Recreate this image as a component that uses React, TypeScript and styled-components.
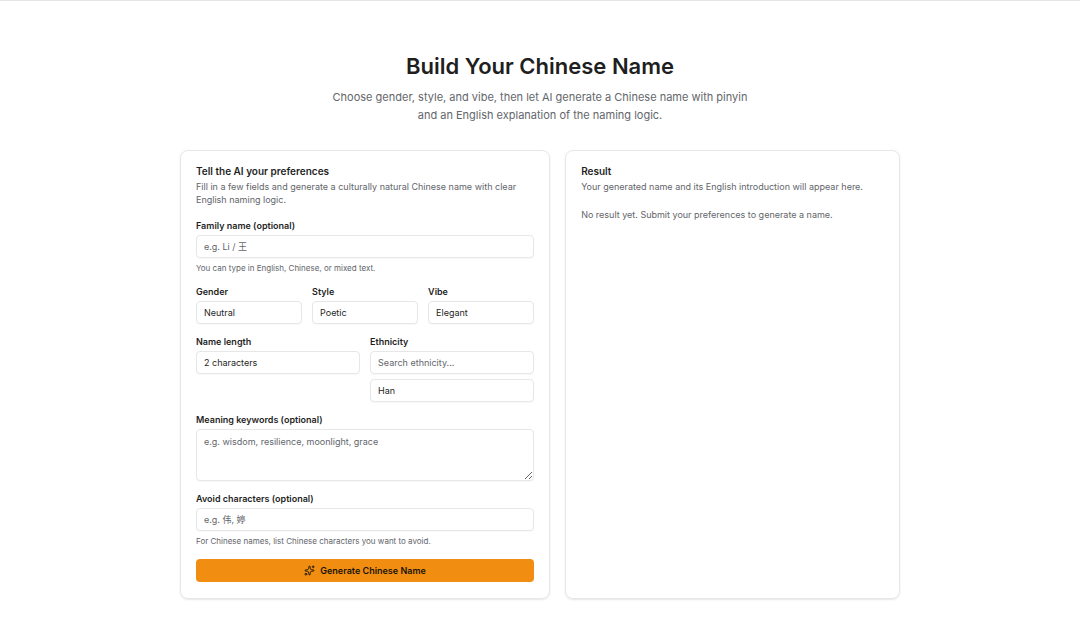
import React from "react";
import styled, { createGlobalStyle } from "styled-components";
import { Sparkles } from "lucide-react";

const GlobalStyle = createGlobalStyle`
  *, *::before, *::after { box-sizing: border-box; }
  body {
    margin: 0;
    background: #fff;
    color: #1f1f1f;
    font-family: Inter, "Noto Sans CJK SC", sans-serif;
    font-size: 9px;
  }
  h1, h2, p { margin: 0; }
`;

const Page = styled.main`
  border-top: 1px solid #e5e5e5;
  padding: 49px 16px 20px;
`;

const Container = styled.div`
  max-width: 720px;
  margin: 0 auto;
`;

const Hero = styled.header`
  text-align: center;
  margin-bottom: 26px;
`;

const HeroTitle = styled.h1`
  font-size: 22px;
  line-height: 32px;
  font-weight: 600;
`;

const HeroText = styled.p`
  max-width: 430px;
  margin: 6px auto 0;
  font-size: 11px;
  line-height: 18px;
  color: #63666b;
`;

const Columns = styled.div`
  display: grid;
  grid-template-columns: 21fr 19fr;
  gap: 15px;
`;

const Card = styled.section`
  border: 1px solid #e6e7e9;
  border-radius: 8px;
  padding: 15px 15px 16px;
  box-shadow: 0 1px 2px rgba(0, 0, 0, 0.1);
`;

const CardTitle = styled.h2`
  font-size: 10px;
  line-height: 10px;
  font-weight: 600;
`;

const CardText = styled.p`
  margin-top: 4px;
  line-height: 13px;
  color: #63666b;
`;

const EmptyState = styled.p`
  margin-top: 15px;
  line-height: 13px;
  color: #63666b;
`;

const Form = styled.form`
  display: grid;
  gap: 12px;
  margin-top: 14px;
`;

const Row = styled.div<{ $columns: number }>`
  display: grid;
  grid-template-columns: repeat(${(p) => p.$columns}, minmax(0, 1fr));
  align-items: start;
  gap: 10px;
`;

const Field = styled.div`
  display: grid;
  gap: 5px;
`;

const Label = styled.label`
  padding-top: 1px;
  margin-bottom: -1px;
  font-size: 9px;
  line-height: 10px;
  font-weight: 600;
`;

const Hint = styled.p`
  font-size: 8px;
  line-height: 11px;
  color: #63666b;
`;

const control = `
  width: 100%;
  margin: 0;
  border: 1px solid #e6e7e9;
  border-radius: 4px;
  background: #fff;
  color: #1f1f1f;
  font: inherit;
  box-shadow: 0 1px 1px rgba(0, 0, 0, 0.03);
  &::placeholder { color: #63666b; opacity: 1; }
`;

const Input = styled.input`
  ${control}
  height: 23px;
  padding: 0 7px;
`;

const Select = styled.select`
  ${control}
  height: 23px;
  padding: 0 7px;
  appearance: none;
`;

const Textarea = styled.textarea`
  ${control}
  display: block;
  height: 52px;
  padding: 5px 7px;
  line-height: 13px;
  resize: vertical;
`;

const SubmitButton = styled.button`
  display: flex;
  align-items: center;
  justify-content: center;
  gap: 5px;
  height: 23px;
  border: 0;
  border-radius: 4px;
  background: #f18e11;
  color: #1a1408;
  font: inherit;
  font-weight: 600;
`;

type SelectFieldProps = { id: string; label: string; options: string[] };

const SelectField = ({ id, label, options }: SelectFieldProps) => (
  <Field>
    <Label htmlFor={id}>{label}</Label>
    <Select id={id}>
      {options.map((o) => (
        <option key={o}>{o}</option>
      ))}
    </Select>
  </Field>
);

export default function App() {
  return (
    <>
      <GlobalStyle />
      <Page>
        <Container>
          <Hero>
            <HeroTitle>Build Your Chinese Name</HeroTitle>
            <HeroText>
              Choose gender, style, and vibe, then let AI generate a Chinese name with pinyin and an English
              explanation of the naming logic.
            </HeroText>
          </Hero>
          <Columns>
            <Card>
              <CardTitle>Tell the AI your preferences</CardTitle>
              <CardText>
                Fill in a few fields and generate a culturally natural Chinese name with clear English naming logic.
              </CardText>
              <Form onSubmit={(e) => e.preventDefault()}>
                <Field>
                  <Label htmlFor="family">Family name (optional)</Label>
                  <Input id="family" placeholder="e.g. Li / 王" />
                  <Hint>You can type in English, Chinese, or mixed text.</Hint>
                </Field>
                <Row $columns={3}>
                  <SelectField id="gender" label="Gender" options={["Neutral"]} />
                  <SelectField id="style" label="Style" options={["Poetic"]} />
                  <SelectField id="vibe" label="Vibe" options={["Elegant"]} />
                </Row>
                <Row $columns={2}>
                  <SelectField id="length" label="Name length" options={["2 characters"]} />
                  <Field>
                    <Label htmlFor="ethnicity-search">Ethnicity</Label>
                    <Input id="ethnicity-search" placeholder="Search ethnicity..." />
                    <Select aria-label="Ethnicity">
                      <option>Han</option>
                    </Select>
                  </Field>
                </Row>
                <Field>
                  <Label htmlFor="keywords">Meaning keywords (optional)</Label>
                  <Textarea id="keywords" placeholder="e.g. wisdom, resilience, moonlight, grace" />
                </Field>
                <Field>
                  <Label htmlFor="avoid">Avoid characters (optional)</Label>
                  <Input id="avoid" placeholder="e.g. 伟, 婷" />
                  <Hint>For Chinese names, list Chinese characters you want to avoid.</Hint>
                </Field>
                <SubmitButton type="submit">
                  <Sparkles size={11} aria-hidden="true" />
                  Generate Chinese Name
                </SubmitButton>
              </Form>
            </Card>
            <Card>
              <CardTitle>Result</CardTitle>
              <CardText>Your generated name and its English introduction will appear here.</CardText>
              <EmptyState>No result yet. Submit your preferences to generate a name.</EmptyState>
            </Card>
          </Columns>
        </Container>
      </Page>
    </>
  );
}
